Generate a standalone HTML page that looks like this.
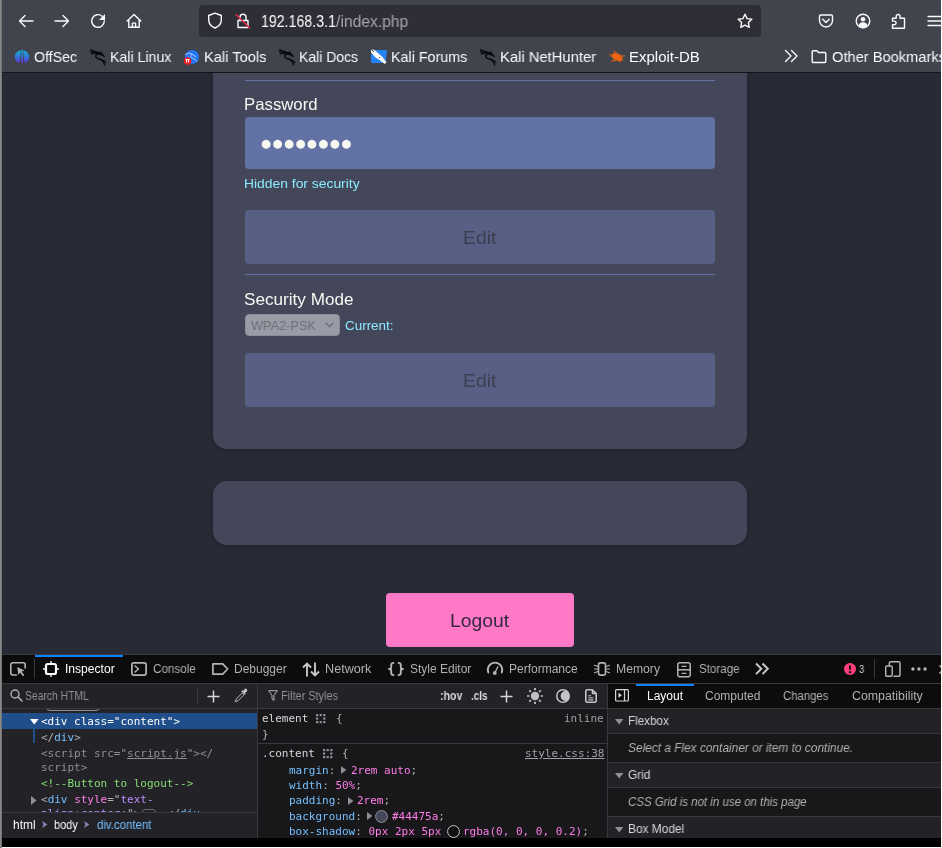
<!DOCTYPE html>
<html lang="en">
<head>
<meta charset="utf-8">
<title>192.168.3.1/index.php</title>
<style>
html,body{margin:0;padding:0;}
body{width:942px;height:848px;overflow:hidden;position:relative;background:#282a36;font-family:"Liberation Sans",sans-serif;}
.a{position:absolute;}
.t{position:absolute;white-space:pre;line-height:1;transform-origin:0 50%;will-change:transform;}
svg{position:absolute;overflow:visible;}
#chrome{left:2px;top:0;width:939px;height:72px;background:#42444d;}
#chrome-line{left:2px;top:72px;width:939px;height:1px;background:#15161b;}
#urlbar{left:199px;top:5px;width:562px;height:32px;border-radius:4px;background:#2e2f36;}
#page{left:2px;top:73px;width:939px;height:581px;background:#282a36;overflow:hidden;}
.card{background:#44475a;border-radius:14px;box-shadow:0 2px 5px rgba(0,0,0,.2);}
.hr{height:1px;background:#6272a4;left:245px;width:470px;}
.inp{background:#6272a4;border-radius:4px;}
.btn{background:#576084;border-radius:4px;}
#logout{background:#ff79c6;border-radius:4px;}
#sel{background:#999ba7;border:1px solid #8b8d9a;border-radius:4px;box-sizing:border-box;}
#dt{left:2px;top:654px;width:939px;height:184px;background:#232327;overflow:hidden;}
.bd{background:#38383d;}

</style>
</head>
<body>
<div class="a" style="left:0;top:0;width:1px;height:848px;background:#888888"></div>
<div class="a" style="left:1px;top:0;width:1px;height:848px;background:#747474"></div>
<header id="chrome" class="a"></header>
<div id="chrome-line" class="a"></div>
<div id="urlbar" class="a"></div>
<svg style="left:18px;top:13px;" width="16" height="16" viewBox="0 0 16 16"><path fill="none" stroke="#fbfbfe" stroke-width="1.4" stroke-linecap="round" stroke-linejoin="round" d="M15 8H1.500M7 2.500L1.500 8 7 13.500"/></svg>
<svg style="left:54px;top:13px;" width="16" height="16" viewBox="0 0 16 16"><path fill="none" stroke="#fbfbfe" stroke-width="1.4" stroke-linecap="round" stroke-linejoin="round" d="M1 8h13.500M9 2.500L14.500 8 9 13.500"/></svg>
<svg style="left:90px;top:13px;" width="16" height="16" viewBox="0 0 16 16"><path fill="none" stroke="#fbfbfe" stroke-width="1.4" stroke-linecap="round" stroke-linejoin="round" d="M14.3 8a6.3 6.3 0 1 1-2.2-4.8"/><path fill="#fbfbfe" d="M15 1v6H9z"/></svg>
<svg style="left:126px;top:13px;" width="16" height="16" viewBox="0 0 16 16"><path fill="none" stroke="#fbfbfe" stroke-width="1.4" stroke-linecap="round" stroke-linejoin="round" d="M1.2 8L8 1.4 14.8 8M2.8 6.8V14.3h10.4V6.8M6.4 14.3v-4.2h3.2v4.2"/></svg>
<svg style="left:207px;top:12px;" width="16" height="17" viewBox="0 0 16 17"><path fill="none" stroke="#fbfbfe" stroke-width="1.4" stroke-linecap="round" stroke-linejoin="round" d="M8 1.2l6.3 2.3v4.3c0 4-2.6 6.8-6.3 8.2C4.3 14.6 1.7 11.800 1.700 7.800V3.500z"/></svg>
<svg style="left:235px;top:12px;" width="16" height="17" viewBox="0 0 16 17"><path fill="none" stroke="#fbfbfe" stroke-width="1.4" stroke-linecap="round" stroke-linejoin="round" d="M3 8.500h10v7H3zM5 8.300V5.300a3 3 0 0 1 6 0V8.300"/><path d="M1 2.500L14.500 15.800" stroke="#e22850" stroke-width="1.5" stroke-linecap="round"/></svg>
<span class="t" style="left:260.6px;font-size:15.8px;color:#fbfbfe;font-family:'Liberation Sans',sans-serif;top:14px;transform:scaleX(0.8975);">192.168.3.1</span>
<span class="t" style="left:335.8px;font-size:15.8px;color:#a4a5ab;font-family:'Liberation Sans',sans-serif;top:14px;transform:scaleX(0.9917);">/index.php</span>
<svg style="left:737px;top:13px;" width="16" height="16" viewBox="0 0 16 16"><path fill="none" stroke="#fbfbfe" stroke-width="1.4" stroke-linecap="round" stroke-linejoin="round" d="M8 1.300l2.100 4.300 4.700.700-3.400 3.300.800 4.700L8 12.100l-4.200 2.200.800-4.700L1.200 6.300l4.700-.700z"/></svg>
<svg style="left:818px;top:13px;" width="16" height="16" viewBox="0 0 16 16"><path fill="none" stroke="#fbfbfe" stroke-width="1.4" stroke-linecap="round" stroke-linejoin="round" d="M1.500 3.200a1.200 1.200 0 0 1 1.200-1.200h10.600a1.200 1.200 0 0 1 1.200 1.200v4.300a6.500 6.500 0 0 1-13 0zM4.800 6.300L8 9.400l3.200-3.100"/></svg>
<svg style="left:855px;top:13px;" width="16" height="16" viewBox="0 0 16 16"><circle fill="none" stroke="#fbfbfe" stroke-width="1.4" stroke-linecap="round" stroke-linejoin="round" cx="8" cy="8" r="6.800"/><circle cx="8" cy="6.300" r="2.300" fill="#fbfbfe"/><path d="M3.600 12.400a4.600 4.600 0 0 1 8.800 0A6.500 6.500 0 0 1 3.600 12.400z" fill="#fbfbfe"/></svg>
<svg style="left:891px;top:13px;" width="16" height="16" viewBox="0 0 16 16"><path fill="none" stroke="#fbfbfe" stroke-width="1.4" stroke-linecap="round" stroke-linejoin="round" d="M1.500 5.300h3.700V3.400a1.900 1.900 0 0 1 3.800 0v1.900h4.500v9.900H1.500v-3.500h1.800a1.800 1.800 0 0 0 0-3.600H1.500z"/></svg>
<svg style="left:927px;top:13px;" width="16" height="16" viewBox="0 0 16 16"><path fill="none" stroke="#fbfbfe" stroke-width="1.4" stroke-linecap="round" stroke-linejoin="round" d="M1 3.500h14M1 8h14M1 12.500h14"/></svg>
<span class="t" style="left:34.4px;font-size:15px;color:#fbfbfe;font-family:'Liberation Sans',sans-serif;top:49px;transform:scaleX(0.9453);">OffSec</span>
<span class="t" style="left:110.3px;font-size:15px;color:#fbfbfe;font-family:'Liberation Sans',sans-serif;top:49px;transform:scaleX(0.9439);">Kali Linux</span>
<span class="t" style="left:204.2px;font-size:15px;color:#fbfbfe;font-family:'Liberation Sans',sans-serif;top:49px;transform:scaleX(0.9760);">Kali Tools</span>
<span class="t" style="left:299.1px;font-size:15px;color:#fbfbfe;font-family:'Liberation Sans',sans-serif;top:49px;transform:scaleX(0.9328);">Kali Docs</span>
<span class="t" style="left:391.2px;font-size:15px;color:#fbfbfe;font-family:'Liberation Sans',sans-serif;top:49px;transform:scaleX(0.9534);">Kali Forums</span>
<span class="t" style="left:500.4px;font-size:15px;color:#fbfbfe;font-family:'Liberation Sans',sans-serif;top:49px;transform:scaleX(0.9852);">Kali NetHunter</span>
<span class="t" style="left:629.4px;font-size:15px;color:#fbfbfe;font-family:'Liberation Sans',sans-serif;top:49px;transform:scaleX(0.9963);">Exploit-DB</span>
<span class="t" style="left:832px;font-size:15px;color:#fbfbfe;font-family:'Liberation Sans',sans-serif;top:49px;transform:scaleX(0.9767);">Other Bookmarks</span>
<svg style="left:14px;top:49px;" width="16" height="16" viewBox="0 0 16 16"><defs><linearGradient id="og" x1="0" y1="0" x2="0" y2="1"><stop offset="0" stop-color="#16b7d6"/><stop offset=".6" stop-color="#3a63d8"/><stop offset="1" stop-color="#7b1ff0"/></linearGradient></defs><path fill="url(#og)" d="M6.600 1.200C3 2 .8 4.800.8 8c0 2.400 1.500 4.500 4 6 1.300-2.500 1.800-8 1.800-12.800zM9.400 1.200C13 2 15.200 4.800 15.200 8c0 2.400-1.500 4.500-4 6-1.300-2.500-1.800-8-1.800-12.800zM7.300.8h1.400l.3 11.700-1 3-1-3z"/></svg>
<svg style="left:90px;top:49px;" width="16" height="16" viewBox="0 0 16 16"><g fill="none" stroke="#08090c" stroke-linecap="round" stroke-linejoin="round"><path stroke-width="1.2" d="M.4.900L6.800 3M.400 2.900l6.100.500M1.200 4.900l5.300-1.100"/><path stroke-width="1.1" fill="#08090c" d="M6.500 2.800c1.500.900 3 .900 4.200.200l3.600 4.600-3.500-2c-1.300-.300-2.300-.300-3.300-.500z"/><path stroke-width="1.500" d="M7.600 4.500C5 6 5 8.600 8 9.500c3 .800 5 2 5.800 4l.700 2.300"/><path stroke-width="1.100" d="M12.300 11c1.500.500 2.800 1.300 3.600 2.500"/></g></svg>
<svg style="left:279px;top:49px;" width="16" height="16" viewBox="0 0 16 16"><g fill="none" stroke="#08090c" stroke-linecap="round" stroke-linejoin="round"><path stroke-width="1.2" d="M.4.900L6.800 3M.400 2.900l6.100.500M1.200 4.900l5.300-1.100"/><path stroke-width="1.1" fill="#08090c" d="M6.500 2.800c1.500.900 3 .900 4.200.200l3.600 4.600-3.500-2c-1.300-.300-2.300-.300-3.300-.500z"/><path stroke-width="1.500" d="M7.600 4.500C5 6 5 8.600 8 9.500c3 .800 5 2 5.800 4l.700 2.300"/><path stroke-width="1.100" d="M12.300 11c1.500.500 2.800 1.300 3.600 2.500"/></g></svg>
<svg style="left:480px;top:49px;" width="16" height="16" viewBox="0 0 16 16"><g fill="none" stroke="#08090c" stroke-linecap="round" stroke-linejoin="round"><path stroke-width="1.2" d="M.4.900L6.800 3M.400 2.900l6.100.500M1.200 4.900l5.300-1.100"/><path stroke-width="1.1" fill="#08090c" d="M6.500 2.800c1.500.900 3 .900 4.200.200l3.600 4.600-3.500-2c-1.300-.300-2.300-.300-3.300-.500z"/><path stroke-width="1.500" d="M7.600 4.500C5 6 5 8.600 8 9.500c3 .800 5 2 5.800 4l.700 2.300"/><path stroke-width="1.100" d="M12.300 11c1.500.500 2.800 1.300 3.600 2.500"/></g></svg>
<svg style="left:184px;top:49px;" width="16" height="16" viewBox="0 0 16 16"><circle cx="8" cy="8" r="7.100" fill="#2476f2"/><path d="M1.500 5.500c2.500-1.700 5-1.600 6.500-.300 1.500 1.300 2.500 1.500 3.800 2.300M7.500 5.500c-1.200 1.200-1 2.800.500 3.500 1.800.800 3.500 1.400 4.600 3" stroke="#bcd6fb" stroke-width=".9" fill="none" stroke-linecap="round"/><circle cx="3.600" cy="12" r="3.800" fill="#ee1c25"/><path d="M2.500 10.600v3M4.600 10.600v3M1.700 10.600h3.700" stroke="#fff" stroke-width="1" fill="none"/></svg>
<svg style="left:371px;top:49px;" width="16" height="16" viewBox="0 0 16 16"><path fill="#2583f3" d="M3 1h12a1 1 0 0 1 1 1.200L14.500 13a1 1 0 0 1-1 .900H1a1 1 0 0 1-1-1V6z"/><path d="M0 .300l3.500.700L11 7.500l4.500 5.800-1.700 1.700-4.600-3.500L4.500 8.500 0 3.500z" fill="#fbfbfb"/><circle cx="8.500" cy="8.600" r=".7" fill="#333"/><path d="M.300.500l2.500 2.300" stroke="#222" stroke-width="1"/></svg>
<svg style="left:609px;top:50px;" width="16" height="14" viewBox="0 0 16 14"><g fill="none" stroke="#ee6511" stroke-width="1" stroke-linecap="round"><ellipse cx="8" cy="7" rx="5.400" ry="3.100" fill="#ee6511" transform="rotate(24 8 7)"/><path d="M4.500.800L8 3.500M.600 4.200l1 2M2.500 11.200l4-.800M9.500 10.500l1.500 1.700M11.500 6.200l4-.300M12 9.500l1.800.500"/></g></svg>
<svg style="left:784px;top:49px;" width="14" height="14" viewBox="0 0 14 14"><path fill="none" stroke="#fbfbfe" stroke-width="1.4" stroke-linecap="round" stroke-linejoin="round" d="M1.500 1.500L7 7l-5.500 5.500M7.500 1.500L13 7l-5.500 5.500"/></svg>
<svg style="left:811px;top:49px;" width="16" height="15" viewBox="0 0 16 15"><path fill="none" stroke="#fbfbfe" stroke-width="1.4" stroke-linecap="round" stroke-linejoin="round" d="M1.200 2.700a1 1 0 0 1 1-1h3.600l1.700 1.800h6.300a1 1 0 0 1 1 1v8a1 1 0 0 1-1 1H2.200a1 1 0 0 1-1-1z"/></svg>
<main id="page" class="a">
<div class="a card" style="left:211px;top:-33px;width:534px;height:409px;"></div>
<div class="a card" style="left:211px;top:408px;width:534px;height:64px;"></div>
<div class="a hr" style="left:243px;top:7px;width:470px;height:1px;"></div>
<div class="a inp" style="left:243px;top:44px;width:470px;height:52px;"></div>
<div class="a btn" style="left:243px;top:137px;width:470px;height:54px;"></div>
<div class="a hr" style="left:243px;top:201px;width:470px;height:1px;"></div>
<div id="sel" class="a" style="left:243px;top:241px;width:95px;height:22px;"></div>
<div class="a btn" style="left:243px;top:280px;width:470px;height:54px;"></div>
<div id="logout" class="a" style="left:384px;top:520px;width:188px;height:54px;"></div>
</main>
<span class="t" style="left:244.2px;font-size:16.5px;color:#f8f8f2;font-family:'Liberation Sans',sans-serif;top:96px;transform:scaleX(1.0158);">Password</span>
<span class="t" style="left:260.7px;font-size:11.5px;color:#f8f8f2;font-family:'Liberation Sans',sans-serif;top:137.9px;font-family:'DejaVu Sans',sans-serif;letter-spacing:1.43px;">●●●●●●●●</span>
<span class="t" style="left:244.2px;font-size:13px;color:#8be9fd;font-family:'Liberation Sans',sans-serif;top:176.7px;transform:scaleX(1.0665);">Hidden for security</span>
<span class="t" style="left:463px;font-size:19px;color:#3c3e51;font-family:'Liberation Sans',sans-serif;top:227.7px;transform:scaleX(1.0198);">Edit</span>
<span class="t" style="left:244.2px;font-size:16.5px;color:#f8f8f2;font-family:'Liberation Sans',sans-serif;top:290.6px;transform:scaleX(1.0392);">Security Mode</span>
<span class="t" style="left:251px;font-size:13.3px;color:#6e6e75;font-family:'Liberation Sans',sans-serif;top:318.8px;transform:scaleX(0.9596);">WPA2-PSK</span>
<svg style="left:324.5px;top:322px;" width="9" height="6" viewBox="0 0 9 6"><path d="M.7.700L4.500 4.700 8.300.700" fill="none" stroke="#6c6e7a" stroke-width="1.300"/></svg>
<span class="t" style="left:345px;font-size:13px;color:#8be9fd;font-family:'Liberation Sans',sans-serif;top:318.7px;transform:scaleX(1.0326);">Current:</span>
<span class="t" style="left:463px;font-size:19px;color:#3c3e51;font-family:'Liberation Sans',sans-serif;top:370.7px;transform:scaleX(1.0198);">Edit</span>
<span class="t" style="left:450.2px;font-size:18.5px;color:#33283f;font-family:'Liberation Sans',sans-serif;top:611.7px;transform:scaleX(1.0425);">Logout</span>
<section id="dt" class="a"></section>
<div class="a bd" style="left:2px;top:654px;width:939px;height:1px;"></div>
<div id="dt-tabs" class="a" style="left:2px;top:655px;width:939px;height:28px;background:#0c0c0d"></div>
<div class="a bd" style="left:2px;top:683px;width:939px;height:1px;"></div>
<div class="a" style="left:35px;top:655px;width:88px;height:2px;background:#0a84ff"></div>
<div class="a bd" style="left:34px;top:659px;width:1px;height:20px;"></div>
<div id="dt-search" class="a" style="left:2px;top:684px;width:255px;height:24px;background:#232327"></div>
<div id="dt-filter" class="a" style="left:258px;top:684px;width:349px;height:24px;background:#232327"></div>
<div id="dt-sidetabs" class="a" style="left:608px;top:684px;width:333px;height:24px;background:#0c0c0d"></div>
<div class="a bd" style="left:2px;top:708px;width:939px;height:1px;"></div>
<div id="dt-markup" class="a" style="left:2px;top:709px;width:255px;height:103px;background:#232327"></div>
<div id="dt-rules" class="a" style="left:258px;top:709px;width:349px;height:129px;background:#18181a"></div>
<div id="dt-layout" class="a" style="left:608px;top:709px;width:333px;height:129px;background:#18181a"></div>
<div class="a bd" style="left:257px;top:684px;width:1px;height:154px;"></div>
<div class="a bd" style="left:607px;top:684px;width:1px;height:154px;"></div>
<span class="t" style="left:65.4px;font-size:12px;color:#ffffff;font-family:'Liberation Sans',sans-serif;top:663px;transform:scaleX(1.0069);">Inspector</span>
<span class="t" style="left:153.3px;font-size:12px;color:#b1b1b3;font-family:'Liberation Sans',sans-serif;top:663px;transform:scaleX(0.9720);">Console</span>
<span class="t" style="left:234.4px;font-size:12px;color:#b1b1b3;font-family:'Liberation Sans',sans-serif;top:663px;transform:scaleX(0.9977);">Debugger</span>
<span class="t" style="left:325.1px;font-size:12px;color:#b1b1b3;font-family:'Liberation Sans',sans-serif;top:663px;transform:scaleX(1.0542);">Network</span>
<span class="t" style="left:409.7px;font-size:12px;color:#b1b1b3;font-family:'Liberation Sans',sans-serif;top:663px;transform:scaleX(0.9941);">Style Editor</span>
<span class="t" style="left:509.3px;font-size:12px;color:#b1b1b3;font-family:'Liberation Sans',sans-serif;top:663px;transform:scaleX(0.9956);">Performance</span>
<span class="t" style="left:616.3px;font-size:12px;color:#b1b1b3;font-family:'Liberation Sans',sans-serif;top:663px;transform:scaleX(1.0151);">Memory</span>
<span class="t" style="left:698.8px;font-size:12px;color:#b1b1b3;font-family:'Liberation Sans',sans-serif;top:663px;transform:scaleX(0.9659);">Storage</span>
<span class="t" style="left:859px;font-size:11px;color:#d0d0d3;font-family:'Liberation Sans',sans-serif;top:663.9px;transform:scaleX(0.8653);">3</span>
<div class="a bd" style="left:874px;top:659px;width:1px;height:20px;"></div>
<svg style="left:10px;top:662px;" width="17" height="15" viewBox="0 0 17 15"><path fill="none" stroke="#b4b4b7" stroke-linecap="round" stroke-linejoin="round" stroke-width="1.600" d="M6.500 13H2.800a2 2 0 0 1-2-2V2.800a2 2 0 0 1 2-2h10.400a2 2 0 0 1 2 2V6"/><path d="M7.300 5l7.300 3.600-3 1 2.700 3.500-1.400 1.100-2.700-3.600-1.900 2.400z" fill="#b4b4b7"/></svg>
<svg style="left:43px;top:661px;" width="16" height="16" viewBox="0 0 16 16"><rect x="3" y="3" width="10" height="10" rx="1.800" fill="none" stroke="#fff" stroke-width="2.200"/><path d="M8 0v2M8 14v2M0 8h2M14 8h2" stroke="#c0c0c4" stroke-width="1.800"/></svg>
<svg style="left:131px;top:662px;" width="16" height="14" viewBox="0 0 16 14"><rect x=".9" y=".9" width="14.200" height="12.200" rx="2" fill="none" stroke="#b4b4b7" stroke-linecap="round" stroke-linejoin="round" stroke-width="1.700"/><path fill="none" stroke="#b4b4b7" stroke-linecap="round" stroke-linejoin="round" stroke-width="1.500" d="M4 4l3.500 3L4 10"/></svg>
<svg style="left:212px;top:663px;" width="17" height="12" viewBox="0 0 17 12"><path fill="none" stroke="#b4b4b7" stroke-linecap="round" stroke-linejoin="round" stroke-width="1.700" d="M.9.900h9.800l5 5.100-5 5.100H.9z"/></svg>
<svg style="left:302px;top:662px;" width="18" height="15" viewBox="0 0 18 15"><path fill="none" stroke="#c8c8cb" stroke-width="1.900" stroke-linejoin="miter" d="M5 14.500V1.500M1 5.500l4-4 4 4M13 .500v13M9 9.500l4 4 4-4"/></svg>
<svg style="left:388px;top:662px;" width="16" height="14" viewBox="0 0 16 14"><path fill="none" stroke="#b4b4b7" stroke-linecap="round" stroke-linejoin="round" stroke-width="1.900" d="M5.500.900C3.500.900 3.200 1.800 3.200 3v2.200C3.200 6.300 2.500 7 1 7c1.500 0 2.200.700 2.200 1.800V11c0 1.200.300 2.100 2.300 2.100M10.500.900c2 0 2.300.900 2.300 2.100v2.200c0 1.100.700 1.800 2.200 1.800-1.500 0-2.200.700-2.200 1.800V11c0 1.200-.300 2.100-2.300 2.100"/></svg>
<svg style="left:486px;top:660px;" width="18" height="16" viewBox="0 0 18 16"><path fill="none" stroke="#b4b4b7" stroke-linecap="round" stroke-linejoin="round" stroke-width="1.900" d="M2.300 12.500A7.200 7.200 0 1 1 15.700 12.500"/><path fill="none" stroke="#b4b4b7" stroke-linecap="round" stroke-linejoin="round" stroke-width="1.300" d="M11.800 6.800L9 12.500"/><circle cx="8.800" cy="13" r="1.900" fill="#b4b4b7"/></svg>
<svg style="left:594px;top:662px;" width="16" height="14" viewBox="0 0 16 14"><rect x="4.500" y=".9" width="7" height="12.200" rx="2" fill="none" stroke="#b4b4b7" stroke-linecap="round" stroke-linejoin="round" stroke-width="1.600"/><path fill="none" stroke="#b4b4b7" stroke-linecap="round" stroke-linejoin="round" stroke-width="1.200" d="M.500 3.300l3.500 1.200M.500 7h3.500M.500 10.700l3.500-1.200M15.500 3.300L12 4.500M15.500 7H12M15.500 10.700L12 9.500"/></svg>
<svg style="left:677px;top:661.5px;" width="14" height="16" viewBox="0 0 14 16"><rect x=".8" y=".8" width="12.400" height="14" rx="2" fill="none" stroke="#b4b4b7" stroke-linecap="round" stroke-linejoin="round" stroke-width="1.500"/><path fill="none" stroke="#b4b4b7" stroke-linecap="round" stroke-linejoin="round" stroke-width="1.400" d="M.8 7.800h12.400"/><path fill="none" stroke="#b4b4b7" stroke-linecap="round" stroke-linejoin="round" stroke-width="1.200" d="M5 4.300h4M5 11.300h4"/></svg>
<svg style="left:754.5px;top:663.4px;" width="14" height="12" viewBox="0 0 14 12"><path fill="none" stroke="#c8c8cb" stroke-width="2" d="M1 .500l5.300 5.300L1 11.100M7.500.500l5.300 5.300-5.300 5.300"/></svg>
<svg style="left:844px;top:663px;" width="12" height="12" viewBox="0 0 12 12"><circle cx="6" cy="6" r="6" fill="#fc3f7a"/><path d="M6 2.500v4.200" stroke="#0c0c0d" stroke-width="1.800"/><circle cx="6" cy="9.200" r="1.100" fill="#0c0c0d"/></svg>
<svg style="left:885px;top:661px;" width="16" height="16" viewBox="0 0 16 16"><path fill="none" stroke="#b4b4b7" stroke-linecap="round" stroke-linejoin="round" stroke-width="1.500" d="M4.300 4V2.300a1.500 1.500 0 0 1 1.500-1.500h7.700a1.500 1.500 0 0 1 1.500 1.500v11.500a1.500 1.500 0 0 1-1.500 1.500H9"/><rect x=".7" y="5" width="6.500" height="10.300" rx="1.200" fill="none" stroke="#b4b4b7" stroke-linecap="round" stroke-linejoin="round" stroke-width="1.400"/></svg>
<svg style="left:910px;top:667px;" width="17" height="4" viewBox="0 0 17 4"><circle cx="2.900" cy="2" r="1.700" fill="#b4b4b7"/><circle cx="8.900" cy="2" r="1.700" fill="#b4b4b7"/><circle cx="15" cy="2" r="1.700" fill="#b4b4b7"/></svg>
<svg style="left:938.5px;top:664.5px;" width="9" height="9" viewBox="0 0 9 9"><path d="M.500.500l8 8M8.500.500l-8 8" stroke="#b4b4b7" stroke-width="1.500"/></svg>
<div class="a" style="left:2px;top:713px;width:255px;height:16px;background:#204e8a"></div>
<span class="t" style="left:41.3px;font-size:11px;color:#b1b1b3;font-family:'DejaVu Sans Mono','Liberation Mono',monospace;top:715.6px;"><span style="color:#ffffff;">&lt;div class=&quot;content&quot;&gt;</span></span>
<svg style="left:29.7px;top:718.6px;" width="8.6" height="5.4" viewBox="0 0 8.6 5.4"><path d="M0 0h8.600L4.300 5.400z" fill="#fff"/></svg>
<div class="a" style="left:33px;top:729px;width:2px;height:14px;background:#204e8a"></div>
<span class="t" style="left:41.3px;font-size:11px;color:#b1b1b3;font-family:'DejaVu Sans Mono','Liberation Mono',monospace;top:732px;"><span style="color:#b1b1b3;">&lt;/</span><span style="color:#75bfff;">div</span><span style="color:#b1b1b3;">&gt;</span></span>
<span class="t" style="left:41.3px;font-size:11px;color:#b1b1b3;font-family:'DejaVu Sans Mono','Liberation Mono',monospace;top:747.7px;"><span style="color:#8f8f94;">&lt;script src=&quot;</span><span style="color:#8f8f94;text-decoration:underline;">script.js</span><span style="color:#8f8f94;">&quot;&gt;&lt;/</span></span>
<span class="t" style="left:41.3px;font-size:11px;color:#b1b1b3;font-family:'DejaVu Sans Mono','Liberation Mono',monospace;top:761.7px;"><span style="color:#8f8f94;">script&gt;</span></span>
<span class="t" style="left:41.3px;font-size:11px;color:#b1b1b3;font-family:'DejaVu Sans Mono','Liberation Mono',monospace;top:778px;"><span style="color:#86de74;">&lt;!--Button to logout--&gt;</span></span>
<span class="t" style="left:41.3px;font-size:11px;color:#b1b1b3;font-family:'DejaVu Sans Mono','Liberation Mono',monospace;top:793.8px;"><span style="color:#b1b1b3;">&lt;</span><span style="color:#75bfff;">div</span><span style="color:#ffffff;"> </span><span style="color:#ff7de9;">style</span><span style="color:#b1b1b3;">=&quot;</span><span style="color:#b98eff;">text-</span></span>
<span class="t" style="left:41.3px;font-size:11px;color:#b1b1b3;font-family:'DejaVu Sans Mono','Liberation Mono',monospace;top:807.8px;"><span style="color:#b98eff;">align:center;</span><span style="color:#b1b1b3;">&quot;&gt;</span><span style="color:#ffffff;">    </span><span style="color:#b1b1b3;">&lt;/</span><span style="color:#75bfff;">div</span></span>
<svg style="left:31px;top:796px;" width="6" height="9" viewBox="0 0 6 9"><path d="M0 0v9l5.500-4.500z" fill="#8f8f94"/></svg>
<div class="a" style="left:46px;top:700px;width:54px;height:11.3px;border:1.300px solid #8f8f94;border-radius:4px;box-sizing:border-box;"></div>
<div class="a" style="left:2px;top:684px;width:255px;height:24px;background:#232327"></div>
<div class="a bd" style="left:2px;top:708px;width:255px;height:1px;"></div>
<div class="a" style="left:142px;top:808.5px;width:14px;height:10px;border:1px solid #6a6a6e;border-radius:3px;box-sizing:border-box;"></div>
<svg style="left:10px;top:689px;" width="13" height="13" viewBox="0 0 13 13"><circle cx="5" cy="5" r="4" fill="none" stroke="#b1b1b3" stroke-width="1.400"/><path d="M8 8l4 4" stroke="#b1b1b3" stroke-width="1.600" stroke-linecap="round"/></svg>
<span class="t" style="left:25.3px;font-size:12px;color:#8f8f94;font-family:'Liberation Sans',sans-serif;top:690px;transform:scaleX(0.8631);">Search HTML</span>
<div class="a bd" style="left:197px;top:688px;width:1px;height:16px;"></div>
<svg style="left:207px;top:689.5px;" width="13" height="13" viewBox="0 0 13 13"><path d="M6.500.500v12M.500 6.500h12" stroke="#d7d7db" stroke-width="1.500"/></svg>
<svg style="left:234px;top:688px;" width="14" height="15" viewBox="0 0 14 15"><path d="M1.200 13.800l1-2.800 6-6 1.800 1.800-6 6z" fill="none" stroke="#b1b1b3" stroke-width="1"/><path d="M7.200 3.200l1-1 .9.900 1.400-1.900a1.500 1.500 0 0 1 2.300 2.300l-1.900 1.400.9.900-1 1z" fill="#c4c4c7"/></svg>
<div id="dt-crumbs" class="a" style="left:2px;top:812px;width:255px;height:26px;background:#232327;border-top:1px solid #38383d;box-sizing:border-box;"></div>
<span class="t" style="left:12.5px;font-size:12px;color:#f9f9fa;font-family:'Liberation Sans',sans-serif;top:818.6px;transform:scaleX(0.9836);">html</span>
<span class="t" style="left:54.1px;font-size:12px;color:#f9f9fa;font-family:'Liberation Sans',sans-serif;top:818.6px;transform:scaleX(0.9143);">body</span>
<span class="t" style="left:97.2px;font-size:12px;color:#75bfff;font-family:'Liberation Sans',sans-serif;top:818.6px;transform:scaleX(0.9518);">div.content</span>
<svg style="left:41.6px;top:821.2px;" width="6" height="7" viewBox="0 0 6 7"><path d="M0 0l5.400 3.500L0 7l1.400-3.500z" fill="#8a85b8"/></svg>
<svg style="left:84.4px;top:821.2px;" width="6" height="7" viewBox="0 0 6 7"><path d="M0 0l5.400 3.500L0 7l1.400-3.500z" fill="#8a85b8"/></svg>
<svg style="left:267.5px;top:690px;" width="10" height="12" viewBox="0 0 10 12"><path d="M.600.700h8.800L6 5.300v5.200L4 9V5.300z" fill="none" stroke="#b1b1b3" stroke-width="1"/></svg>
<span class="t" style="left:281.4px;font-size:12px;color:#8f8f94;font-family:'Liberation Sans',sans-serif;top:690px;transform:scaleX(0.9093);">Filter Styles</span>
<span class="t" style="left:439.7px;font-size:12px;color:#d7d7db;font-family:'Liberation Sans',sans-serif;top:690px;transform:scaleX(0.8838);font-weight:bold;">:hov</span>
<span class="t" style="left:470.7px;font-size:12px;color:#d7d7db;font-family:'Liberation Sans',sans-serif;top:690px;transform:scaleX(0.8244);font-weight:bold;">.cls</span>
<svg style="left:500px;top:689.5px;" width="13" height="13" viewBox="0 0 13 13"><path d="M6.500.500v12M.500 6.500h12" stroke="#d7d7db" stroke-width="1.500"/></svg>
<svg style="left:527px;top:688px;" width="16" height="16" viewBox="0 0 16 16"><circle cx="8" cy="8" r="4.200" fill="#c0c0c3"/><path d="M8 0v2.300M8 13.700v2.300M0 8h2.300M13.700 8h2.300M2.300 2.300l1.700 1.700M12 12l1.700 1.700M2.300 13.700l1.700-1.700M12 4l1.700-1.700" stroke="#c8c8cb" stroke-width="1.700"/></svg>
<svg style="left:556px;top:689px;" width="14" height="14" viewBox="0 0 14 14"><defs><clipPath id="mc"><circle cx="7" cy="7" r="6.300"/></clipPath></defs><circle cx="9.600" cy="7" r="5" fill="#c4c4c7" clip-path="url(#mc)"/><circle cx="7" cy="7" r="6.250" fill="none" stroke="#c4c4c7" stroke-width="1.500"/></svg>
<svg style="left:585px;top:689px;" width="12" height="14" viewBox="0 0 12 14"><path d="M2.300 .800h5L11.200 4.500v7.200a1.500 1.500 0 0 1-1.500 1.500H2.300A1.500 1.500 0 0 1 .800 11.700V2.300A1.500 1.500 0 0 1 2.300.800zM7.500 .800v3.700h3.700" fill="none" stroke="#c4c4c7" stroke-width="1.600" stroke-linejoin="round"/><path d="M3.300 6.700h2.800M3.300 8.800h5M3.300 10.900h5" stroke="#c4c4c7" stroke-width="1.100"/></svg>
<span class="t" style="left:262.2px;font-size:11px;color:#b1b1b3;font-family:'DejaVu Sans Mono','Liberation Mono',monospace;top:712.9px;"><span style="color:#d7d7db;">element</span></span>
<svg style="left:315.8px;top:714px;" width="10" height="10" viewBox="0 0 10 10"><g fill="#8f8f94"><rect x="0" y="0" width="2.200" height="2.200"/><rect x="0" y="3.5" width="2.200" height="2.200"/><rect x="0" y="7" width="2.200" height="2.200"/><rect x="3.6" y="0" width="2.200" height="2.200"/><rect x="3.6" y="7" width="2.200" height="2.200"/><rect x="7.2" y="0" width="2.200" height="2.200"/><rect x="7.2" y="3.5" width="2.200" height="2.200"/><rect x="7.2" y="7" width="2.200" height="2.200"/></g></svg>
<span class="t" style="left:335.6px;font-size:11px;color:#b1b1b3;font-family:'DejaVu Sans Mono','Liberation Mono',monospace;top:712.9px;"><span style="color:#b1b1b3;">{</span></span>
<span class="t" style="left:564.364px;font-size:11px;color:#b1b1b3;font-family:'DejaVu Sans Mono','Liberation Mono',monospace;top:712.9px;"><span style="color:#a0a0a4;">inline</span></span>
<span class="t" style="left:262.2px;font-size:11px;color:#b1b1b3;font-family:'DejaVu Sans Mono','Liberation Mono',monospace;top:729px;"><span style="color:#b1b1b3;">}</span></span>
<div class="a bd" style="left:258px;top:743px;width:349px;height:1px;"></div>
<span class="t" style="left:262.2px;font-size:11px;color:#b1b1b3;font-family:'DejaVu Sans Mono','Liberation Mono',monospace;top:747.9px;"><span style="color:#d7d7db;">.content</span></span>
<svg style="left:323px;top:749px;" width="10" height="10" viewBox="0 0 10 10"><g fill="#8f8f94"><rect x="0" y="0" width="2.200" height="2.200"/><rect x="0" y="3.5" width="2.200" height="2.200"/><rect x="0" y="7" width="2.200" height="2.200"/><rect x="3.6" y="0" width="2.200" height="2.200"/><rect x="3.6" y="7" width="2.200" height="2.200"/><rect x="7.2" y="0" width="2.200" height="2.200"/><rect x="7.2" y="3.5" width="2.200" height="2.200"/><rect x="7.2" y="7" width="2.200" height="2.200"/></g></svg>
<span class="t" style="left:342.2px;font-size:11px;color:#b1b1b3;font-family:'DejaVu Sans Mono','Liberation Mono',monospace;top:747.9px;"><span style="color:#b1b1b3;">{</span></span>
<span class="t" style="left:524.629px;font-size:11px;color:#b1b1b3;font-family:'DejaVu Sans Mono','Liberation Mono',monospace;top:747.9px;"><span style="color:#a0a0a4;text-decoration:underline;">style.css:38</span></span>
<span class="t" style="left:289.3px;font-size:11px;color:#b1b1b3;font-family:'DejaVu Sans Mono','Liberation Mono',monospace;top:764.6px;"><span style="color:#75bfff;">margin</span><span style="color:#b1b1b3;">:</span></span>
<svg style="left:341px;top:766.3px;" width="6" height="8" viewBox="0 0 6 8"><path d="M0 0v8l5.300-4z" fill="#8f8f94"/></svg>
<span class="t" style="left:350.5px;font-size:11px;color:#b1b1b3;font-family:'DejaVu Sans Mono','Liberation Mono',monospace;top:764.6px;"><span style="color:#ff7de9;">2rem auto</span><span style="color:#b1b1b3;">;</span></span>
<span class="t" style="left:289.3px;font-size:11px;color:#b1b1b3;font-family:'DejaVu Sans Mono','Liberation Mono',monospace;top:779.9px;"><span style="color:#75bfff;">width</span><span style="color:#b1b1b3;">: </span><span style="color:#ff7de9;">50%</span><span style="color:#b1b1b3;">;</span></span>
<span class="t" style="left:289.3px;font-size:11px;color:#b1b1b3;font-family:'DejaVu Sans Mono','Liberation Mono',monospace;top:795.2px;"><span style="color:#75bfff;">padding</span><span style="color:#b1b1b3;">:</span></span>
<svg style="left:348px;top:797px;" width="6" height="8" viewBox="0 0 6 8"><path d="M0 0v8l5.300-4z" fill="#8f8f94"/></svg>
<span class="t" style="left:356.8px;font-size:11px;color:#b1b1b3;font-family:'DejaVu Sans Mono','Liberation Mono',monospace;top:795.2px;"><span style="color:#ff7de9;">2rem</span><span style="color:#b1b1b3;">;</span></span>
<span class="t" style="left:289.3px;font-size:11px;color:#b1b1b3;font-family:'DejaVu Sans Mono','Liberation Mono',monospace;top:810.5px;"><span style="color:#75bfff;">background</span><span style="color:#b1b1b3;">:</span></span>
<svg style="left:366.6px;top:812.3px;" width="6" height="8" viewBox="0 0 6 8"><path d="M0 0v8l5.300-4z" fill="#8f8f94"/></svg>
<svg style="left:374.7px;top:810px;" width="13" height="13" viewBox="0 0 13 13"><circle cx="6.500" cy="6.500" r="5.900" fill="#44475a" stroke="#8f8f94" stroke-width="1"/></svg>
<span class="t" style="left:392.4px;font-size:11px;color:#b1b1b3;font-family:'DejaVu Sans Mono','Liberation Mono',monospace;top:810.5px;"><span style="color:#ff7de9;">#44475a</span><span style="color:#b1b1b3;">;</span></span>
<span class="t" style="left:289.3px;font-size:11px;color:#b1b1b3;font-family:'DejaVu Sans Mono','Liberation Mono',monospace;top:825.8px;"><span style="color:#75bfff;">box-shadow</span><span style="color:#b1b1b3;">: </span><span style="color:#ff7de9;">0px 2px 5px</span></span>
<svg style="left:446.8px;top:825px;" width="13" height="13" viewBox="0 0 13 13"><circle cx="6.500" cy="6.500" r="5.900" fill="#101012" stroke="#c8c8cc" stroke-width="1"/></svg>
<span class="t" style="left:463.4px;font-size:11px;color:#b1b1b3;font-family:'DejaVu Sans Mono','Liberation Mono',monospace;top:825.8px;"><span style="color:#ff7de9;">rgba(0, 0, 0, 0.2)</span><span style="color:#b1b1b3;">;</span></span>
<div class="a" style="left:636px;top:684px;width:58px;height:2px;background:#0a84ff"></div>
<svg style="left:615px;top:689px;" width="14" height="13" viewBox="0 0 14 13"><rect x=".600" y=".600" width="12.800" height="11.400" rx="1" fill="none" stroke="#d7d7db" stroke-width="1.200"/><path d="M9.500.600v11.400" stroke="#d7d7db" stroke-width="1.200"/><path d="M3.500 3.800l3.500 2.500-3.500 2.500z" fill="#d7d7db"/></svg>
<span class="t" style="left:647.2px;font-size:12px;color:#ffffff;font-family:'Liberation Sans',sans-serif;top:690px;transform:scaleX(0.9880);">Layout</span>
<span class="t" style="left:705.3px;font-size:12px;color:#b1b1b3;font-family:'Liberation Sans',sans-serif;top:690px;transform:scaleX(0.9968);">Computed</span>
<span class="t" style="left:783.4px;font-size:12px;color:#b1b1b3;font-family:'Liberation Sans',sans-serif;top:690px;transform:scaleX(0.9449);">Changes</span>
<span class="t" style="left:851.6px;font-size:12px;color:#b1b1b3;font-family:'Liberation Sans',sans-serif;top:690px;transform:scaleX(1.0305);">Compatibility</span>
<div class="a" style="left:608px;top:709px;width:333px;height:24px;background:#232327;"></div>
<svg style="left:614.8px;top:719px;" width="8.4" height="5.4" viewBox="0 0 8.4 5.4"><path d="M0 0h8.400L4.200 5.400z" fill="#8f8f94"/></svg>
<span class="t" style="left:627.9px;font-size:12.3px;color:#d7d7db;font-family:'Liberation Sans',sans-serif;top:714.7px;transform:scaleX(0.9475);">Flexbox</span>
<div class="a" style="left:608px;top:763px;width:333px;height:24px;background:#232327;"></div>
<svg style="left:614.8px;top:773px;" width="8.4" height="5.4" viewBox="0 0 8.4 5.4"><path d="M0 0h8.400L4.200 5.400z" fill="#8f8f94"/></svg>
<span class="t" style="left:627.9px;font-size:12.3px;color:#d7d7db;font-family:'Liberation Sans',sans-serif;top:768.7px;transform:scaleX(0.9598);">Grid</span>
<div class="a" style="left:608px;top:817px;width:333px;height:21px;background:#232327;"></div>
<svg style="left:614.8px;top:827px;" width="8.4" height="5.4" viewBox="0 0 8.4 5.4"><path d="M0 0h8.400L4.200 5.400z" fill="#8f8f94"/></svg>
<span class="t" style="left:627.9px;font-size:12.3px;color:#d7d7db;font-family:'Liberation Sans',sans-serif;top:822.7px;transform:scaleX(0.9689);">Box Model</span>
<div class="a bd" style="left:608px;top:733px;width:333px;height:1px;"></div>
<div class="a bd" style="left:608px;top:762px;width:333px;height:1px;"></div>
<div class="a bd" style="left:608px;top:787px;width:333px;height:1px;"></div>
<div class="a bd" style="left:608px;top:816px;width:333px;height:1px;"></div>
<span class="t" style="left:628.3px;font-size:12px;color:#b1b1b3;font-family:'Liberation Sans',sans-serif;top:741.5px;transform:scaleX(0.9892);font-style:italic;">Select a Flex container or item to continue.</span>
<span class="t" style="left:628.3px;font-size:12px;color:#b1b1b3;font-family:'Liberation Sans',sans-serif;top:795.6px;transform:scaleX(0.9567);font-style:italic;">CSS Grid is not in use on this page</span>
<div class="a" style="left:2px;top:838px;width:939px;height:9px;background:#000"></div>
<div class="a" style="left:2px;top:847px;width:940px;height:1px;background:#fff"></div>
<div class="a" style="left:941px;top:0px;width:1px;height:848px;background:#fff"></div>
</body>
</html>
